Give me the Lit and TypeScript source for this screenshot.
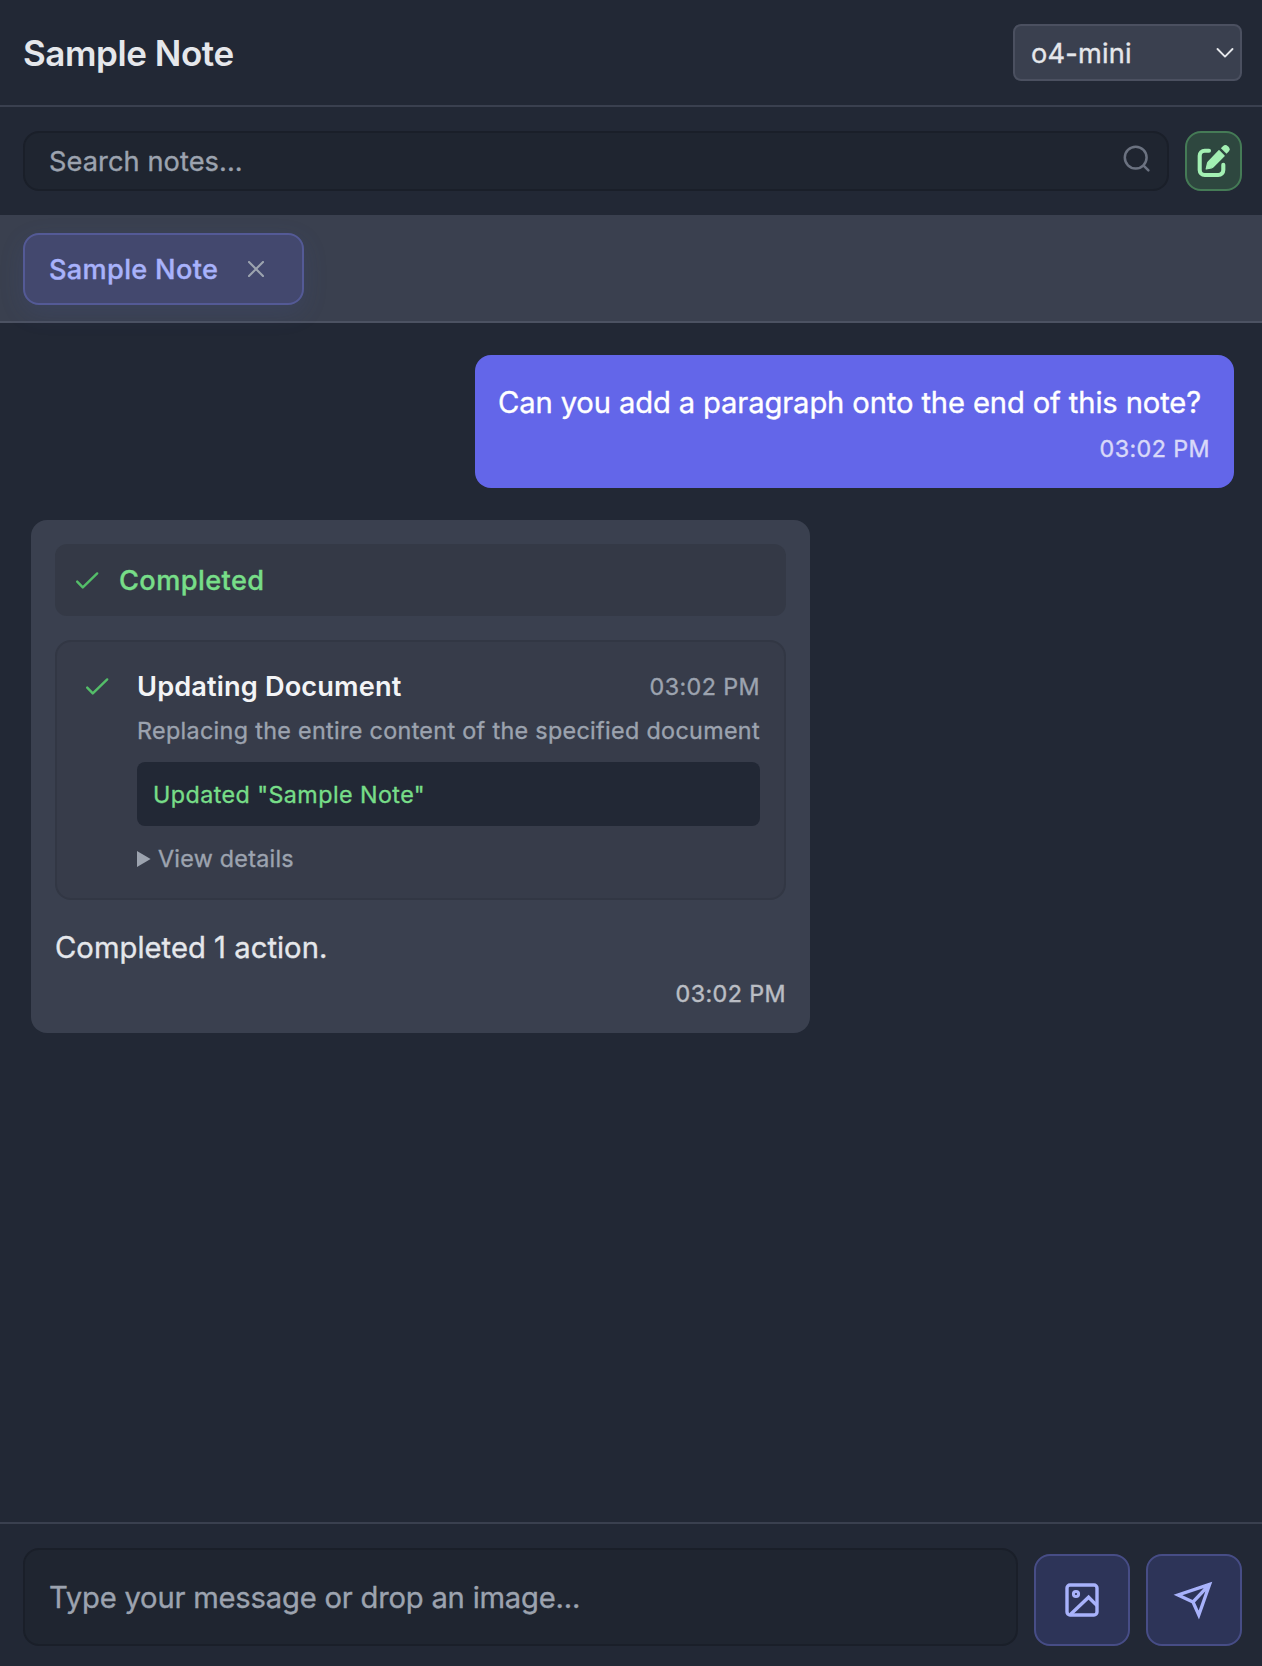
import { LitElement, html, css, svg, nothing } from "lit";
import { customElement, property } from "lit/decorators.js";

const checkIcon = html`<svg class="check" width="24" height="24" viewBox="0 0 24 24" fill="none" stroke="currentColor" stroke-width="2.4" stroke-linecap="round" stroke-linejoin="round">
  ${svg`<path d="M2.2 13.6l5.6 5.8L22.2 5.4"/>`}
</svg>`;

@customElement("chat-bubble")
export class ChatBubble extends LitElement {
  @property({ reflect: true }) role = "user";
  @property() text = "";
  @property() time = "";

  static styles = css`
    :host { display: block; box-sizing: border-box; padding: 24px; border-radius: 16px; }
    :host([role="user"]) { align-self: flex-end; width: 759px; background: #6366e9; color: #fff; }
    :host([role="assistant"]) { align-self: flex-start; width: 779px; background: #3a404f; color: #e5e7eb; }
    .text { padding-top: 1px; font-size: 29.2px; line-height: 45px; letter-spacing: -0.13px; white-space: nowrap; }
    :host([role="user"]) .text { margin-left: -1px; }
    :host([role="assistant"]) .text { letter-spacing: 0.04px; line-height: 46px; }
    .time { margin-top: 8px; font-size: 23.3px; line-height: 31px; letter-spacing: 0.4px; text-align: right; opacity: 0.75; }
    :host([role="assistant"]) .time { margin-top: 7px; }
  `;

  render() {
    return html`
      <slot></slot>
      ${this.text ? html`<div class="text">${this.text}</div>` : nothing}
      <div class="time">${this.time}</div>
    `;
  }
}

@customElement("action-card")
export class ActionCard extends LitElement {
  static styles = css`
    :host { display: flex; box-sizing: border-box; height: 260px; margin: 24px 0; padding: 24px; border: 2px solid #323744; border-radius: 16px; background: #373c4a; }
    .mark { flex: none; width: 56px; height: 40px; box-sizing: border-box; padding: 8px 4px; color: #54be69; }
    .mark svg { display: block; }
    .body { flex: 1; min-width: 0; font-size: 23.3px; color: #9ca3af; white-space: nowrap; }
    .head { display: flex; justify-content: space-between; align-items: center; height: 40px; }
    .title { font-size: 27.2px; font-weight: 600; letter-spacing: 0.13px; color: #f3f4f6; -webkit-text-stroke: 0; }
    .time { letter-spacing: 0.4px; }
    .desc { margin-top: 5px; line-height: 39px; letter-spacing: 0.34px; }
    .result { box-sizing: border-box; height: 64px; margin-top: 12px; padding: 1px 16px 0; border-radius: 8px; line-height: 64px; letter-spacing: 0.43px; background: #222835; color: #77dd88; }
    .details { display: flex; align-items: center; gap: 7px; height: 32px; margin-top: 16px; letter-spacing: 0.26px; }
    .details svg { display: block; margin-top: 1px; }
  `;

  render() {
    return html`
      <div class="mark">${checkIcon}</div>
      <div class="body">
        <div class="head"><span class="title">Updating Document</span><span class="time">03:02 PM</span></div>
        <div class="desc">Replacing the entire content of the specified document</div>
        <div class="result">Updated "Sample Note"</div>
        <div class="details">
          <svg width="14" height="16" viewBox="0 0 14 16"><path d="M0 0L13.6 8L0 16z" fill="currentColor"/></svg>
          <span>View details</span>
        </div>
      </div>
    `;
  }
}

@customElement("app-root")
export class AppRoot extends LitElement {
  static styles = css`
    :host { display: flex; flex-direction: column; box-sizing: border-box; height: 1666px; overflow: hidden; background: #222835; color: #e5e7eb; font-family: Inter, "Liberation Sans", sans-serif; font-size: 27.2px; -webkit-text-stroke: 0.35px currentColor; }
    svg { display: block; flex: none; }
    .header { flex: none; display: flex; align-items: center; justify-content: space-between; box-sizing: border-box; height: 107px; padding: 0 20px 0 23px; border-bottom: 2px solid #3a404f; }
    .title { margin: 0; font-size: 35px; font-weight: 600; letter-spacing: -0.44px; -webkit-text-stroke: 0; }
    .select { display: flex; align-items: center; justify-content: space-between; box-sizing: border-box; width: 229px; height: 57px; padding: 0 6px 0 16px; border: 2px solid #4b5060; border-radius: 8px; background: #3a404f; letter-spacing: 0.2px; }
    .select span { padding-top: 1px; }
    .search-row { flex: none; display: flex; gap: 16px; box-sizing: border-box; height: 108px; padding: 24px 20px 24px 23px; }
    .search { flex: 1; display: flex; align-items: center; justify-content: space-between; box-sizing: border-box; padding: 0 14px 0 24px; border: 2px solid #1a1f29; border-radius: 16px; background: #1f2530; color: #9ca3af; letter-spacing: 0.08px; }
    .search svg { color: #6b7280; }
    .new-note { display: flex; align-items: center; justify-content: center; box-sizing: border-box; width: 57px; padding-right: 2px; border: 2px solid #457b56; border-radius: 16px; background: #2e473f; color: #a3f0b3; }
    .tabs { flex: none; box-sizing: border-box; height: 108px; padding: 18px 23px; border-bottom: 2px solid #4c5262; background: #3a404f; }
    .tab { display: flex; align-items: center; justify-content: space-between; box-sizing: border-box; width: 281px; height: 72px; padding: 0 38px 0 24px; border: 2px solid #545a96; border-radius: 16px; background: #43486e; color: #a8b2fb; font-weight: 500; letter-spacing: 0.3px; white-space: nowrap; box-shadow: 0 8px 24px rgba(70, 90, 170, 0.16); }
    .tab svg { color: #9ca3af; }
    .chat { flex: 1; display: flex; flex-direction: column; gap: 32px; padding: 32px 28px 0 31px; }
    .status { display: flex; align-items: center; gap: 20px; box-sizing: border-box; height: 72px; padding: 0 20px; border-radius: 12px; background: #343946; color: #77dd88; font-weight: 500; letter-spacing: 0.4px; }
    .status svg { color: #54be69; }
    .composer { flex: none; display: flex; align-items: flex-end; gap: 16px; box-sizing: border-box; height: 144px; padding: 24px 20px 20px 23px; border-top: 2px solid #3a404f; }
    .message { flex: 1; display: flex; align-items: center; box-sizing: border-box; height: 98px; padding: 0 24px; border: 2px solid #1a1f29; border-radius: 16px; background: #1f2530; color: #9ca3af; font-size: 29.2px; letter-spacing: -0.21px; }
    .icon-button { display: flex; align-items: center; justify-content: center; box-sizing: border-box; width: 96px; height: 92px; border: 2px solid #474d86; border-radius: 16px; background: #2d3458; color: #a8b2fb; }
  `;

  render() {
    return html`
      <header class="header">
        <h1 class="title">Sample Note</h1>
        <div class="select">
          <span>o4-mini</span>
          <svg width="18" height="18" viewBox="0 0 18 18" fill="none" stroke="currentColor" stroke-width="1.9" stroke-linecap="round" stroke-linejoin="round"><path d="M1.5 5l7.5 7.6L16.5 5"/></svg>
        </div>
      </header>

      <div class="search-row">
        <div class="search">
          <span>Search notes...</span>
          <svg width="32" height="32" viewBox="0 0 32 32" fill="none" stroke="currentColor" stroke-width="2.5" stroke-linecap="round"><circle cx="14.7" cy="12.6" r="10.9"/><path d="M22.6 20.6l4.8 4.8"/></svg>
        </div>
        <div class="new-note">
          <svg width="34" height="34" viewBox="0 0 34 34">
            <path d="M13 6.8H8.7a5 5 0 0 0-5 5v14.2a5 5 0 0 0 5 5h13.6a5 5 0 0 0 5-5V20.8" fill="none" stroke="currentColor" stroke-width="4.1" stroke-linecap="round"/>
            <path d="M23 6.6l5.2 5.2L17 23a3 3 0 0 1-1.4.8l-5.4 1.2 1.2-5.4a3 3 0 0 1 .8-1.6z" fill="currentColor" stroke="currentColor" stroke-width="1.2" stroke-linejoin="round"/>
            <path d="M24.9 4.2l2-2a3.6 3.6 0 0 1 5 0l.6.6a3.6 3.6 0 0 1 0 5l-2 2z" fill="currentColor"/>
          </svg>
        </div>
      </div>

      <div class="tabs">
        <div class="tab">
          <span>Sample Note</span>
          <svg width="16" height="16" viewBox="0 0 16 16" stroke="currentColor" stroke-width="2.1" stroke-linecap="round"><path d="M1 1l14 14M15 1L1 15"/></svg>
        </div>
      </div>

      <main class="chat">
        <chat-bubble role="user" text="Can you add a paragraph onto the end of this note?" time="03:02 PM"></chat-bubble>
        <chat-bubble role="assistant" text="Completed 1 action." time="03:02 PM">
          <div class="status">${checkIcon}<span>Completed</span></div>
          <action-card></action-card>
        </chat-bubble>
      </main>

      <footer class="composer">
        <div class="message">Type your message or drop an image...</div>
        <div class="icon-button">
          <svg width="36" height="36" viewBox="0 0 36 36" fill="none" stroke="currentColor" stroke-width="3.4"><rect x="3" y="3" width="30" height="30" rx="3"/><circle cx="12" cy="12" r="2.6" stroke-width="3"/><path d="M6.4 32.6L24.6 15.2L33 23.6"/></svg>
        </div>
        <div class="icon-button">
          <svg width="44" height="44" viewBox="0 0 44 44" fill="none" stroke="currentColor" stroke-width="3.3"><path d="M37.6 6.4L6 17L21 24L26.8 37z M37.6 6.4L21 24"/></svg>
        </div>
      </footer>
    `;
  }
}
